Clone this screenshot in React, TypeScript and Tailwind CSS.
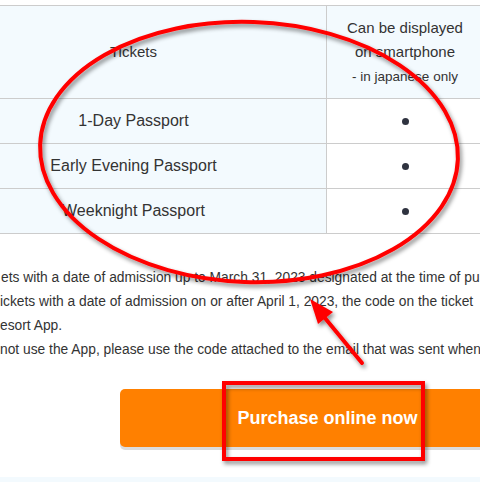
import React from "react";

const font = { fontFamily: '"Liberation Sans", Arial, sans-serif' };

function Row({ label }: { label: string }) {
  return (
    <div className="grid grid-cols-[386px_156px] h-[45px] border-b border-[#cccccc]">
      <div className="flex items-center justify-center bg-[#f3fafe] border-r border-[#cccccc] text-[16px] text-[#333333]">
        {label}
      </div>
      <div className="flex items-center justify-center bg-white">
        <div className="w-[7px] h-[7px] rounded-full bg-[#2f3340]" />
      </div>
    </div>
  );
}

export default function App() {
  return (
    <div className="relative w-[480px] h-[482px] overflow-hidden bg-white" style={font}>
      <div className="pt-[5px]">
        <div className="ml-[-59px] w-[542px] border-t border-[#cccccc]">
          <div className="grid grid-cols-[386px_156px] h-[93px] border-b border-[#cccccc]">
            <div className="flex items-center justify-center bg-[#f3fafe] border-r border-[#cccccc] text-[15px] text-[#333333]">
              Tickets
            </div>
            <div className="flex flex-col items-center justify-center bg-[#f3fafe] text-[#333333] pt-[1px]">
              <span className="text-[15px] leading-[24px]">Can be displayed</span>
              <span className="text-[15px] leading-[24px]">on smartphone</span>
              <span className="text-[13.5px] leading-[26px]">- in japanese only</span>
            </div>
          </div>
          <Row label="1-Day Passport" />
          <Row label="Early Evening Passport" />
          <Row label="Weeknight Passport" />
        </div>
      </div>

      <div className="mt-[32px] text-[13.8px] leading-[24px] text-[#333333] whitespace-nowrap">
        <p className="ml-[1px]">ets with a date of admission up to March 31, 2023 designated at the time of purchase</p>
        <p>ickets with a date of admission on or after April 1, 2023, the code on the ticket</p>
        <p>esort App.</p>
        <p>not use the App, please use the code attached to the email that was sent when</p>
      </div>

      <div className="mt-[27px] ml-[120px] w-[415px] h-[58px] rounded-[5px] bg-[#ff8000] shadow-[0_3px_0_#dcdcdc] flex items-center justify-center">
        <span className="text-white font-bold text-[18px]">Purchase online now</span>
      </div>

      <div className="absolute left-0 right-0 top-[477px] h-[5px] bg-[#f3fafe]" />

      <svg className="absolute inset-0 pointer-events-none" width="480" height="482" viewBox="0 0 480 482">
        <defs>
          <filter id="sh" x="-20%" y="-20%" width="140%" height="140%">
            <feDropShadow dx="2" dy="3" stdDeviation="2" floodColor="#000" floodOpacity="0.45" />
          </filter>
        </defs>
        <g filter="url(#sh)">
          <ellipse cx="249" cy="152" rx="209" ry="130" transform="rotate(2 249 152)" fill="none" stroke="#ff0000" strokeWidth="4" />
          <line x1="362" y1="363" x2="320" y2="312" stroke="#ff0000" strokeWidth="4" strokeLinecap="round" />
          <polygon points="310,299 333,312 318,324" fill="#ff0000" />
          <rect x="224" y="383" width="199" height="76" fill="none" stroke="#ff0000" strokeWidth="4" />
        </g>
      </svg>
    </div>
  );
}
